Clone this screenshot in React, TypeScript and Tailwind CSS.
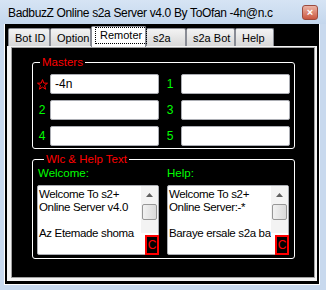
import React from 'react';

const tabs = [
  { label: 'Bot ID', w: 'w-[42px]' },
  { label: 'Option', w: 'w-[41px]' },
  { label: 'Remoter', w: 'w-[55px]', active: true },
  { label: 's2a', w: 'w-[40px]' },
  { label: 's2a Bot', w: 'w-[49px]' },
  { label: 'Help', w: 'w-[39px]' },
];

const masters = [
  { left: 'star', leftVal: '-4n', right: '1' },
  { left: '2', leftVal: '', right: '3' },
  { left: '4', leftVal: '', right: '5' },
];

const Star = () => (
  <svg width="11" height="11" viewBox="0 0 11 11">
    <polygon
      points="5.5,0.6 6.8,4.1 10.5,4.2 7.6,6.5 8.6,10.2 5.5,8.1 2.4,10.2 3.4,6.5 0.5,4.2 4.2,4.1"
      fill="none"
      stroke="#ff0000"
      strokeWidth="1"
    />
  </svg>
);

const TextField = ({ value }: { value: string }) => (
  <div className="w-[109px] h-[20px] bg-white border border-[#abadb3] rounded-[2px] pl-[4px] flex items-center text-[12px] text-black">
    {value}
  </div>
);

const MemoBox = ({ lines }: { lines: string[] }) => (
  <div className="relative w-[122px] h-[70px] bg-white border border-[#abadb3] rounded-[2px] flex">
    <div className="w-[103px] overflow-hidden pl-[1px] pt-[2px] text-[11.5px] tracking-[-0.35px] leading-[13px] text-black whitespace-nowrap">
      {lines.map((l, i) => (
        <div key={i} className="h-[13px]">{l}</div>
      ))}
    </div>
    <div className="w-[17px] h-[47px] bg-[#f3f3f3] flex flex-col items-center">
      <div className="h-[18px] flex items-center justify-center">
        <svg width="7" height="4" viewBox="0 0 7 4">
          <polygon points="3.5,0 7,4 0,4" fill="#606060" />
        </svg>
      </div>
      <div className="w-[15px] h-[16px] rounded-[2px] border border-[#979797] bg-linear-to-r from-[#f2f2f2] to-[#d9d9d9]" />
    </div>
    <div className="absolute right-[-1px] bottom-[-1px] w-[14px] h-[20px] bg-black border-2 border-[#ff0000] flex items-center justify-center text-[12px] text-[#ff0000] leading-none">
      C
    </div>
  </div>
);

export default function App() {
  return (
    <div
      className="w-[326px] h-[290px] bg-[#c8d9ee] flex flex-col overflow-hidden"
      style={{ fontFamily: '"Liberation Sans", Arial, sans-serif' }}
    >
      {/* Title bar */}
      <div className="h-[24px] flex items-center justify-between pl-[8px] pr-[8px] bg-linear-to-b from-[#d6e4f4] to-[#c4d7ed]">
        <span className="text-[12px] tracking-[-0.35px] text-black leading-none pt-[1px] whitespace-nowrap">
          BadbuzZ Online s2a Server v4.0 By ToOfan -4n@n.c
        </span>
        <div className="w-[16px] h-[15px] rounded-[3px] border border-[#9a4a3e] bg-linear-to-b from-[#eab3a5] to-[#c9553f] flex items-center justify-center text-white text-[11px] font-bold leading-none">
          ×
        </div>
      </div>

      {/* Client */}
      <div className="ml-[4px] w-[316px] h-[261px] border-x border-b border-white bg-black pt-[2px]">
        {/* Tabs */}
        <div className="h-[20px] flex items-end pl-[3px] text-[11px] text-black">
          {tabs.map(tab =>
            tab.active ? (
              <div
                key={tab.label}
                className={`${tab.w} h-[21px] -mb-[1px] relative z-10 bg-white border border-b-0 border-[#898c95] rounded-t-[2px] pl-[3px]`}
              >
                <span className="inline-block h-[17px] leading-[15px] px-[4px] border border-dotted border-black">
                  {tab.label}
                </span>
              </div>
            ) : (
              <div
                key={tab.label}
                className={`${tab.w} h-[18px] bg-linear-to-b from-[#f3f3f3] to-[#d8d8d8] border border-b-0 border-[#898c95] rounded-t-[2px] pl-[6px] pt-[3px] leading-[13px]`}
              >
                {tab.label}
              </div>
            )
          )}
        </div>

        {/* Tab page */}
        <div className="ml-[2px] w-[310px] h-[235px] border-t border-l-[4px] border-r-[2px] border-b-[3px] border-[#f4f4f4]">
          <div className="h-full border border-[#a0a0a0] bg-black pt-[7px] pl-[20px]">
            {/* Masters */}
            <fieldset className="w-[263px] border border-white rounded-[3px] pl-[1px] pb-[2px]">
              <legend className="ml-[6px] px-[2px] text-[11.5px] leading-[14px] text-[#ff0000]">Masters</legend>
              <div className="mt-[5px] flex flex-col gap-[6px]">
                {masters.map((row, i) => (
                  <div key={i} className="flex items-center h-[20px]">
                    <div className="w-[16px] flex justify-center text-[12px] text-[#00ff00]">
                      {row.left === 'star' ? <Star /> : row.left}
                    </div>
                    <TextField value={row.leftVal} />
                    <div className="w-[22px] text-center text-[12px] text-[#00ff00]">{row.right}</div>
                    <TextField value="" />
                  </div>
                ))}
              </div>
            </fieldset>

            {/* Welcome & help */}
            <fieldset className="mt-[3px] w-[263px] border border-white rounded-[3px] pl-[4px] pb-[3px]">
              <legend className="ml-[7px] px-[2px] text-[11.5px] leading-[14px] text-[#ff0000]">Wlc &amp; Help Text</legend>
              <div className="mt-[1px] flex gap-[8px]">
                <div className="flex flex-col">
                  <div className="h-[13px] pl-[1px] text-[11.5px] leading-[13px] text-[#00ff00]">Welcome:</div>
                  <div className="mt-[5px]">
                    <MemoBox lines={['Welcome To s2+', 'Online Server v4.0', '', 'Az Etemade shoma']} />
                  </div>
                </div>
                <div className="flex flex-col">
                  <div className="h-[13px] text-[11.5px] leading-[13px] text-[#00ff00]">Help:</div>
                  <div className="mt-[5px]">
                    <MemoBox lines={['Welcome To s2+', 'Online Server:-*', '', 'Baraye ersale s2a ba']} />
                  </div>
                </div>
              </div>
            </fieldset>
          </div>
        </div>
      </div>
    </div>
  );
}
